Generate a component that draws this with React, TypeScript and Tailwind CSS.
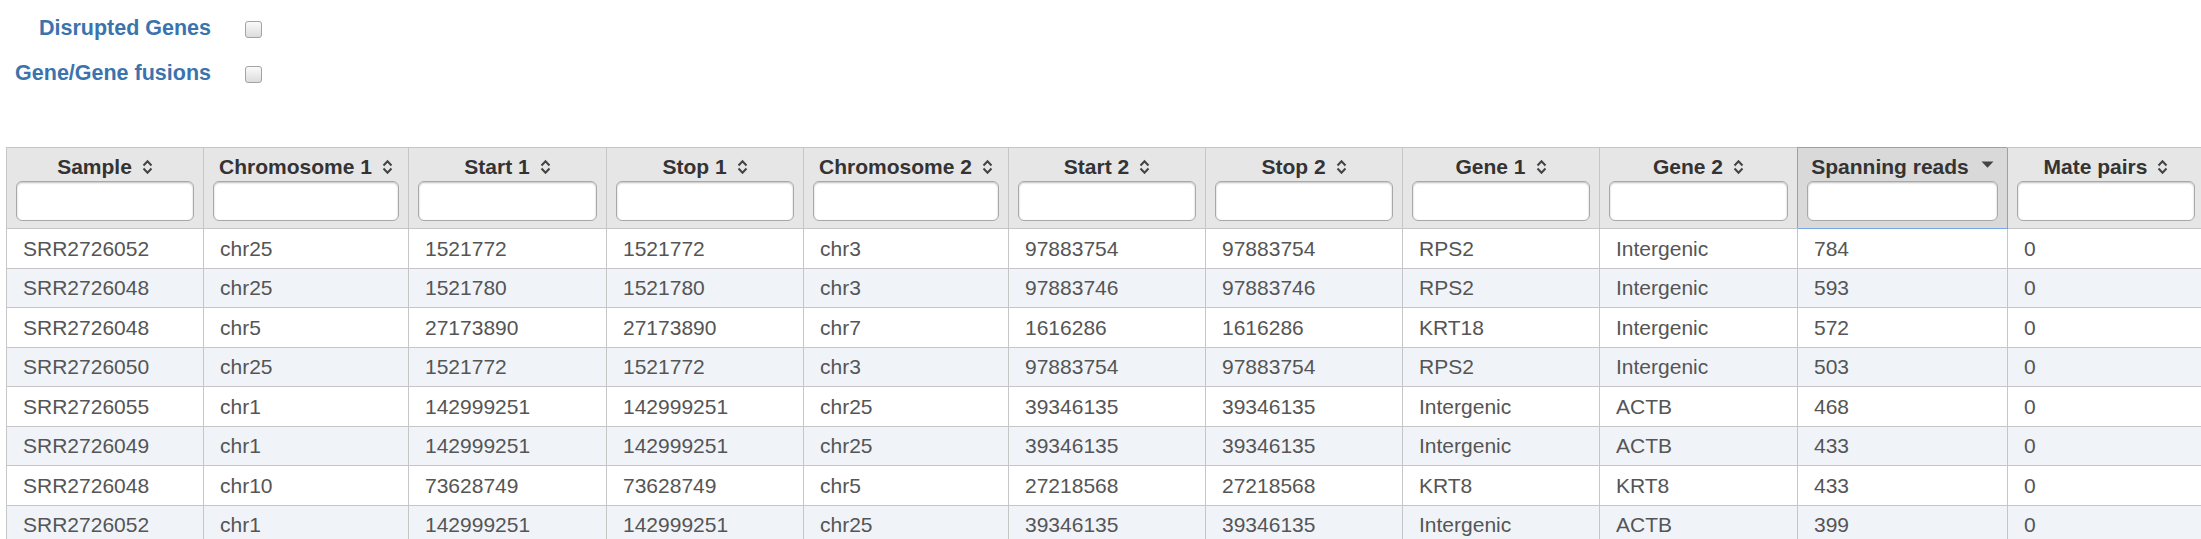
const columns = [
  { label: "Sample", width: 197 },
  { label: "Chromosome 1", width: 205 },
  { label: "Start 1", width: 198 },
  { label: "Stop 1", width: 197 },
  { label: "Chromosome 2", width: 205 },
  { label: "Start 2", width: 197 },
  { label: "Stop 2", width: 197 },
  { label: "Gene 1", width: 197 },
  { label: "Gene 2", width: 198 },
  { label: "Spanning reads", width: 210, sorted: true },
  { label: "Mate pairs", width: 197 },
];

const rows = [
  ["SRR2726052", "chr25", "1521772", "1521772", "chr3", "97883754", "97883754", "RPS2", "Intergenic", "784", "0"],
  ["SRR2726048", "chr25", "1521780", "1521780", "chr3", "97883746", "97883746", "RPS2", "Intergenic", "593", "0"],
  ["SRR2726048", "chr5", "27173890", "27173890", "chr7", "1616286", "1616286", "KRT18", "Intergenic", "572", "0"],
  ["SRR2726050", "chr25", "1521772", "1521772", "chr3", "97883754", "97883754", "RPS2", "Intergenic", "503", "0"],
  ["SRR2726055", "chr1", "142999251", "142999251", "chr25", "39346135", "39346135", "Intergenic", "ACTB", "468", "0"],
  ["SRR2726049", "chr1", "142999251", "142999251", "chr25", "39346135", "39346135", "Intergenic", "ACTB", "433", "0"],
  ["SRR2726048", "chr10", "73628749", "73628749", "chr5", "27218568", "27218568", "KRT8", "KRT8", "433", "0"],
  ["SRR2726052", "chr1", "142999251", "142999251", "chr25", "39346135", "39346135", "Intergenic", "ACTB", "399", "0"],
];

function SortIcon() {
  return (
    <svg width="11" height="16" viewBox="0 0 11 16" className="ml-[10px] shrink-0">
      <path d="M1.5 6.5 L5.5 2.2 L9.5 6.5" fill="none" stroke="#444" strokeWidth="2" />
      <path d="M1.5 9.5 L5.5 13.8 L9.5 9.5" fill="none" stroke="#444" strokeWidth="2" />
    </svg>
  );
}

function CaretDown() {
  return (
    <svg width="13" height="7" viewBox="0 0 13 7" className="ml-[12px] shrink-0 mb-[6px]">
      <path d="M0.5 0.5 L12.5 0.5 L6.5 6.8 Z" fill="#444" />
    </svg>
  );
}

function Checkbox() {
  return (
    <div className="w-[17px] h-[17px] rounded-[3px] border border-[#a3a3a3] bg-gradient-to-b from-[#fafafa] to-[#dcdcdc]" />
  );
}

export default function App() {
  const gridCols =
    "grid grid-cols-[197px_205px_198px_197px_205px_197px_197px_197px_198px_210px_197px]";

  return (
    <div
      className="w-[2201px] h-[539px] overflow-hidden bg-white"
      style={{ fontFamily: '"Liberation Sans", Arial, sans-serif' }}
    >
      {/* Filter options */}
      <div className="flex flex-col gap-[11px] pt-[12px]">
        {["Disrupted Genes", "Gene/Gene fusions"].map((label) => (
          <div key={label} className="flex items-center h-[34px]">
            <div className="w-[211px] text-right text-[21.5px] font-bold text-[#3a73ad] leading-none">
              {label}
            </div>
            <div className="ml-[34px]">
              <Checkbox />
            </div>
          </div>
        ))}
      </div>

      {/* Results table */}
      <div className="mt-[56px] ml-[6px] w-max border-l border-t border-[#c6c6c6]">
        <div className={gridCols}>
          {columns.map((col) => (
            <div
              key={col.label}
              className={
                "h-[81px] flex flex-col px-[9px] pt-[6px] border-r border-b " +
                (col.sorted
                  ? "bg-[#d9d9d9] border-[#7aa6e6] shadow-[-1px_-1px_0_0_#7aa6e6]"
                  : "bg-[#e6e6e6] border-[#c6c6c6]")
              }
            >
              <div className="h-[26px] flex items-center justify-center text-[21px] font-bold text-[#333] whitespace-nowrap">
                <span>{col.label}</span>
                {col.sorted ? <CaretDown /> : <SortIcon />}
              </div>
              <input
                type="text"
                className="mt-[1px] h-[40px] w-full rounded-[6px] border border-[#a8a8a8] bg-white shadow-[inset_0_1px_2px_rgba(0,0,0,0.25)] outline-none"
              />
            </div>
          ))}
        </div>

        {rows.map((row, i) => (
          <div key={i} className={gridCols + (i % 2 === 1 ? " bg-[#f0f4f9]" : " bg-white")}>
            {row.map((cell, j) => (
              <div
                key={j}
                className="h-[39.5px] flex items-center pl-[16px] border-r border-b border-[#c6c6c6] text-[21px] text-[#555] whitespace-nowrap"
              >
                {cell}
              </div>
            ))}
          </div>
        ))}
      </div>
    </div>
  );
}
